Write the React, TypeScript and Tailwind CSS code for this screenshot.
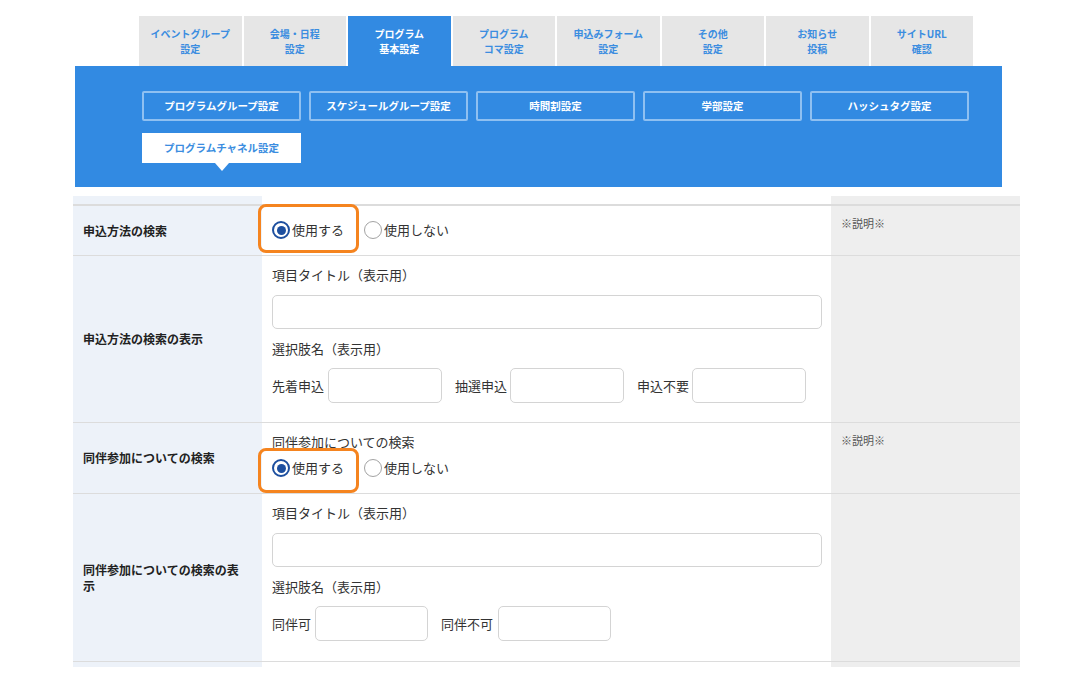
import React from "react";

const tabs: { top: string; bottom: string; active?: boolean }[] = [
  { top: "イベントグループ", bottom: "設定" },
  { top: "会場・日程", bottom: "設定" },
  { top: "プログラム", bottom: "基本設定", active: true },
  { top: "プログラム", bottom: "コマ設定" },
  { top: "申込みフォーム", bottom: "設定" },
  { top: "その他", bottom: "設定" },
  { top: "お知らせ", bottom: "投稿" },
  { top: "サイトURL", bottom: "確認" },
];

const subMenus = ["プログラムグループ設定", "スケジュールグループ設定", "時間割設定", "学部設定", "ハッシュタグ設定"];

const Radio = ({ checked, label }: { checked?: boolean; label: string }) => (
  <span className="inline-flex items-center gap-[2px]">
    {checked ? (
      <span className="w-[18px] h-[18px] rounded-full border-2 border-[#1d4f9f] flex items-center justify-center bg-white">
        <span className="w-[9px] h-[9px] rounded-full bg-[#1d4f9f]" />
      </span>
    ) : (
      <span className="w-[18px] h-[18px] rounded-full border border-[#a3a3a3] bg-white" />
    )}
    <span>{label}</span>
  </span>
);

const RadioGroup = ({ boxTop }: { boxTop: string }) => (
  <div className="flex items-center gap-[20px] leading-[20px]">
    <span className="relative inline-flex">
      <Radio checked label="使用する" />
      <span
        className={`absolute ${boxTop} -left-[14px] -right-[15px] border-[3px] border-[#f5841f] rounded-[8px] pointer-events-none`}
      />
    </span>
    <Radio label="使用しない" />
  </div>
);

const TextInput = ({ w }: { w: string }) => (
  <div className={`${w} h-[35px] border border-[#d4d4d4] rounded-[5px] bg-white`} />
);

const Label = ({ children }: { children: React.ReactNode }) => (
  <div className="bg-[#edf2f9] flex items-center pl-[10px] pr-[20px] text-[12px] font-bold text-[#222] leading-[16px]">
    {children}
  </div>
);

const Desc = ({ text }: { text?: string }) => (
  <div className="bg-[#eeeeee] pl-[10px] pt-[9px] text-[11px] text-[#555] leading-[16px]">{text}</div>
);

export default function App() {
  return (
    <div className="min-h-screen bg-white pt-[16px] font-['Noto_Sans_CJK_JP','Noto_Sans',sans-serif] text-[#333]">
      {/* top tabs */}
      <div className="ml-[139px] w-[834px] grid grid-cols-8 gap-x-[2px] h-[50px]">
        {tabs.map((t) => (
          <div
            key={t.top + t.bottom}
            className={`flex flex-col items-center justify-center text-[10px] font-bold leading-[15px] ${
              t.active ? "bg-[#328ae2] text-white" : "bg-[#e6e6e6] text-[#3b8de0]"
            }`}
          >
            <span>{t.top}</span>
            <span>{t.bottom}</span>
          </div>
        ))}
      </div>

      {/* sub menu */}
      <div className="ml-[75px] w-[927px] h-[121px] bg-[#328ae2] pt-[25px] pl-[67px]">
        <div className="grid grid-cols-5 w-[827px] gap-x-[8px]">
          {subMenus.map((m) => (
            <div
              key={m}
              className="h-[30px] border-2 border-[#8fc0f1] rounded-[2px] flex items-center justify-center text-white text-[10.5px] font-bold"
            >
              {m}
            </div>
          ))}
        </div>
        <div className="mt-[12px] relative w-[159px] h-[30px] bg-white flex items-center justify-center text-[#3b8de0] text-[10.5px] font-bold">
          プログラムチャネル設定
          <span className="absolute left-1/2 -translate-x-1/2 top-full w-0 h-0 border-l-[7px] border-r-[7px] border-t-[8px] border-l-transparent border-r-transparent border-t-white" />
        </div>
      </div>

      {/* form table */}
      <div className="mt-[9px] ml-[73px] w-[947px] grid grid-cols-[189px_569px_189px] text-[13px]">
        <div className="h-[8px] bg-[#edf2f9]" />
        <div className="h-[8px]" />
        <div className="h-[8px] bg-[#eeeeee]" />

        {/* row 1 */}
        <div className="col-span-3 h-[2px] bg-[#dcdcdc]" />
        <Label>申込方法の検索</Label>
        <div className="px-[10px] pt-[14px] pb-[15px]">
          <RadioGroup boxTop="-top-[16px] -bottom-[13px]" />
        </div>
        <Desc text="※説明※" />

        {/* row 2 */}
        <div className="col-span-3 h-px bg-[#dcdcdc]" />
        <Label>申込方法の検索の表示</Label>
        <div className="pl-[10px] pr-[9px] pt-[9px] pb-[19px]">
          <div className="leading-[20px]">項目タイトル（表示用）</div>
          <div className="mt-[10px] h-[34px] border border-[#d4d4d4] rounded-[5px]" />
          <div className="mt-[10px] leading-[20px]">選択肢名（表示用）</div>
          <div className="mt-[9px] flex items-center">
            <span className="mr-[4px]">先着申込</span>
            <TextInput w="w-[114px]" />
            <span className="ml-[13px] mr-[3px]">抽選申込</span>
            <TextInput w="w-[114px]" />
            <span className="ml-[13px] mr-[3px]">申込不要</span>
            <TextInput w="w-[114px]" />
          </div>
        </div>
        <Desc />

        {/* row 3 */}
        <div className="col-span-3 h-px bg-[#dcdcdc]" />
        <Label>同伴参加についての検索</Label>
        <div className="px-[10px] pt-[9px] pb-[15px]">
          <div className="leading-[20px]">同伴参加についての検索</div>
          <div className="mt-[6px]">
            <RadioGroup boxTop="-top-[10px] -bottom-[15px]" />
          </div>
        </div>
        <Desc text="※説明※" />

        {/* row 4 */}
        <div className="col-span-3 h-px bg-[#dcdcdc]" />
        <Label>同伴参加についての検索の表示</Label>
        <div className="pl-[10px] pr-[9px] pt-[9px] pb-[20px]">
          <div className="leading-[20px]">項目タイトル（表示用）</div>
          <div className="mt-[10px] h-[34px] border border-[#d4d4d4] rounded-[5px]" />
          <div className="mt-[10px] leading-[20px]">選択肢名（表示用）</div>
          <div className="mt-[9px] flex items-center">
            <span className="mr-[4px]">同伴可</span>
            <TextInput w="w-[113px]" />
            <span className="ml-[13px] mr-[5px]">同伴不可</span>
            <TextInput w="w-[113px]" />
          </div>
        </div>
        <Desc />

        <div className="col-span-3 h-px bg-[#dcdcdc]" />
        <div className="h-[5px] bg-[#edf2f9]" />
        <div className="h-[5px]" />
        <div className="h-[5px] bg-[#eeeeee]" />
      </div>
    </div>
  );
}
